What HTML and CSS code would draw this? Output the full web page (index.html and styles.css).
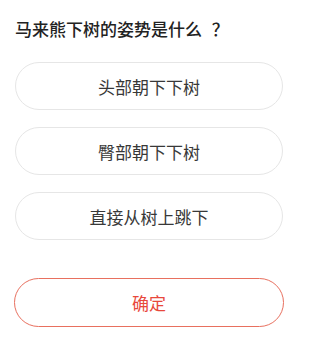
FILE: index.html
```html
<!DOCTYPE html>
<html lang="zh">
<head>
<meta charset="utf-8">
<link rel="stylesheet" href="styles.css">
</head>
<body>
<div class="quiz">
  <div class="question">马来熊下树的姿势是什么 <span class="qmark">？</span></div>
  <div class="options">
    <div class="option">头部朝下下树</div>
    <div class="option">臀部朝下下树</div>
    <div class="option">直接从树上跳下</div>
  </div>
  <div class="confirm">确定</div>
</div>
</body>
</html>
```
FILE: styles.css
```css
html, body {
  margin: 0;
  padding: 0;
  background: #ffffff;
}
.quiz {
  font-family: "Noto Sans CJK SC", "Noto Sans", sans-serif;
  padding: 17px 16px 0 15px;
  width: 299px;
  box-sizing: border-box;
}
.question {
  font-size: 17px;
  line-height: 24px;
  font-weight: 500;
  color: #222222;
  white-space: nowrap;
}
.qmark {
  margin-left: 6px;
}
.options {
  margin-top: 21px;
  display: flex;
  flex-direction: column;
  gap: 17px;
}
.option {
  height: 48px;
  box-sizing: border-box;
  border: 1px solid #e6e6e6;
  border-radius: 24px;
  display: flex;
  align-items: center;
  justify-content: center;
  font-size: 17px;
  color: #383838;
}
.confirm {
  margin: 38px -1px 0 -1px;
  height: 49px;
  box-sizing: border-box;
  border: 1.5px solid #e8705f;
  border-radius: 25px;
  display: flex;
  align-items: center;
  justify-content: center;
  font-size: 17px;
  color: #e8483c;
}
```
